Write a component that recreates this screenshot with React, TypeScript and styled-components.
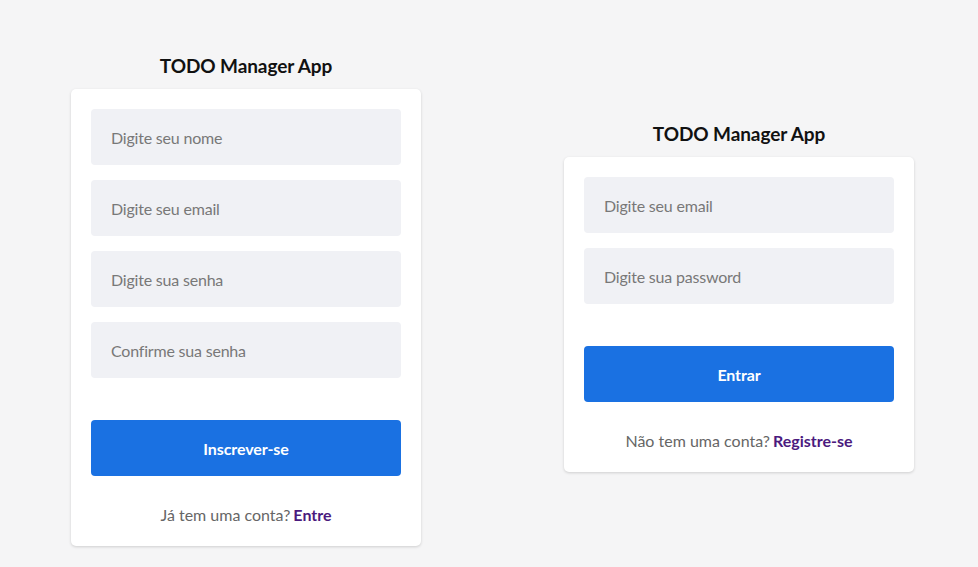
import React from "react";
import styled, { createGlobalStyle } from "styled-components";

const Global = createGlobalStyle`
  html, body { margin: 0; padding: 0; background: #f5f5f6; }
  body { font-family: "Lato", "Noto Sans", sans-serif; }
  * { box-sizing: border-box; }
`;

const Page = styled.div`
  height: 567px;
  display: flex;
  align-items: flex-start;
  padding-left: 71px;
  gap: 143px;
`;

const Column = styled.div<{ $top: number }>`
  width: 350px;
  margin-top: ${(p) => p.$top}px;
  display: flex;
  flex-direction: column;
  align-items: center;
`;

const Title = styled.h1`
  margin: 0 0 11px;
  font-size: 19px;
  line-height: 24px;
  font-weight: 700;
  color: #111;
  letter-spacing: -0.1px;
`;

const Card = styled.form`
  width: 350px;
  background: #fff;
  border-radius: 5px;
  padding: 20px 20px 0;
  box-shadow: 0 1px 3px rgba(0, 0, 0, 0.16);
  display: flex;
  flex-direction: column;
`;

const Field = styled.input`
  height: 56px;
  border: none;
  outline: none;
  border-radius: 4px;
  background: #f0f1f5;
  padding: 0 20px;
  margin-bottom: 15px;
  font-family: inherit;
  font-size: 16px;
  letter-spacing: -0.2px;
  color: #333;
  &::placeholder { color: #787878; }
`;

const Button = styled.button`
  height: 56px;
  margin-top: 27px;
  border: none;
  border-radius: 4px;
  background: #1a71e2;
  color: #fff;
  font-family: inherit;
  font-weight: 700;
  font-size: 16px;
  letter-spacing: -0.1px;
`;

const Footer = styled.p`
  margin: 0;
  height: 70px;
  display: flex;
  align-items: center;
  justify-content: center;
  font-size: 16px;
  letter-spacing: 0;
  color: #666;
  padding-top: 6px;
`;

const LinkText = styled.a`
  margin-left: 3px;
  color: #4b1a7e;
  font-weight: 700;
  text-decoration: none;
`;

export default function App() {
  return (
    <>
      <Global />
      <Page>
        <Column $top={54}>
          <Title>TODO Manager App</Title>
          <Card>
            <Field placeholder="Digite seu nome" />
            <Field placeholder="Digite seu email" />
            <Field placeholder="Digite sua senha" type="password" />
            <Field placeholder="Confirme sua senha" type="password" />
            <Button type="button">Inscrever-se</Button>
            <Footer>
              Já tem uma conta?<LinkText href="#">Entre</LinkText>
            </Footer>
          </Card>
        </Column>
        <Column $top={122}>
          <Title>TODO Manager App</Title>
          <Card>
            <Field placeholder="Digite seu email" />
            <Field placeholder="Digite sua password" type="password" />
            <Button type="button">Entrar</Button>
            <Footer>
              Não tem uma conta?<LinkText href="#">Registre-se</LinkText>
            </Footer>
          </Card>
        </Column>
      </Page>
    </>
  );
}
